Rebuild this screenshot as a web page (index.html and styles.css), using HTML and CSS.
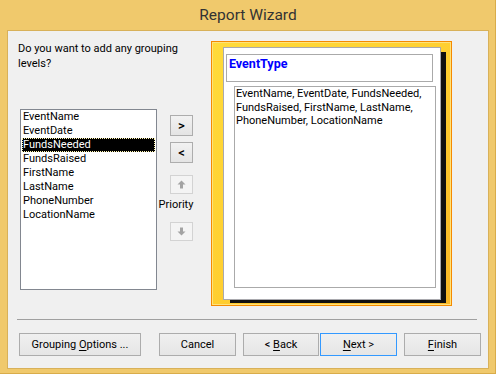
FILE: index.html
```html
<!DOCTYPE html>
<html>
<head>
<meta charset="utf-8">
<link rel="stylesheet" href="styles.css">
</head>
<body>
<div class="window">
  <div class="titlebar">Report Wizard</div>
  <div class="client">
    <div class="main">
      <div class="leftcol">
        <div class="question">Do you want to add any grouping levels?</div>
        <div class="listbox">
          <div class="item">EventName</div>
          <div class="item">EventDate</div>
          <div class="item selected">FundsNeeded</div>
          <div class="item">FundsRaised</div>
          <div class="item">FirstName</div>
          <div class="item">LastName</div>
          <div class="item">PhoneNumber</div>
          <div class="item">LocationName</div>
        </div>
      </div>
      <div class="midcol">
        <div class="sbtn btn-add">&gt;</div>
        <div class="sbtn btn-remove">&lt;</div>
        <div class="sbtn disabled btn-up">
          <svg width="9" height="9" viewBox="0 0 9 9"><path d="M4.5 0.5 L8.5 4.5 L6 4.5 L6 8.5 L3 8.5 L3 4.5 L0.5 4.5 Z" fill="#a3a3a3"/></svg>
        </div>
        <div class="priority">Priority</div>
        <div class="sbtn disabled btn-down">
          <svg width="9" height="9" viewBox="0 0 9 9"><path d="M4.5 8.5 L8.5 4.5 L6 4.5 L6 0.5 L3 0.5 L3 4.5 L0.5 4.5 Z" fill="#a3a3a3"/></svg>
        </div>
      </div>
      <div class="preview">
        <div class="page">
          <div class="grouphead">EventType</div>
          <div class="fields">EventName, EventDate, FundsNeeded, FundsRaised, FirstName, LastName, PhoneNumber, LocationName</div>
        </div>
      </div>
    </div>
    <div class="footer">
      <div class="separator"></div>
      <div class="buttons">
        <div class="btn btn-group"><span>Grouping <u>O</u>ptions ...</span></div>
        <div class="btn btn-cancel"><span>Cancel</span></div>
        <div class="btn btn-back"><span>&lt; <u>B</u>ack</span></div>
        <div class="btn btn-next default"><span><u>N</u>ext &gt;</span></div>
        <div class="btn btn-finish"><span><u>F</u>inish</span></div>
      </div>
    </div>
  </div>
</div>
</body>
</html>
```
FILE: styles.css
```css
* { box-sizing: border-box; }
html, body { margin: 0; padding: 0; }
body {
  width: 496px;
  height: 374px;
  overflow: hidden;
  font-family: Roboto, "Liberation Sans", sans-serif;
  font-size: 11px;
  color: #000;
}
.window {
  width: 496px;
  height: 374px;
  background: #f0c96c;
  border-right: 1px solid #d9ac4a;
  border-bottom: 1px solid #d9ac4a;
  display: flex;
  flex-direction: column;
}
.titlebar {
  height: 30px;
  line-height: 30px;
  text-align: center;
  font-size: 15.5px;
  color: #333;
  padding-left: 1px;
}
.client {
  margin: 0 6px 0 7px;
  width: 482px;
  height: 339px;
  border: 1px solid #d8b15a;
  background: #f0f0f0;
  display: flex;
  flex-direction: column;
  overflow: hidden;
}
.main {
  display: flex;
  padding: 10px 0 0 10px;
  height: 275px;
}
.leftcol {
  width: 139px;
  flex: none;
  display: flex;
  flex-direction: column;
}
.question {
  line-height: 15px;
  font-size: 11px;
  width: 180px;
}
.listbox {
  margin: 38px 0 0 2px;
  width: 137px;
  height: 181px;
  background: #fff;
  border: 1px solid #828790;
  font-size: 11px;
}
.item {
  height: 14px;
  line-height: 14px;
  padding-left: 1px;
  margin: 0 1px;
}
.item.selected {
  background: #000;
  color: #fff;
  outline: 1px dotted #fff6b0;
  outline-offset: -1px;
}
.midcol {
  width: 36px;
  flex: none;
  margin-left: 1px;
  padding-top: 74px;
  display: flex;
  flex-direction: column;
}
.sbtn {
  width: 23px;
  height: 21px;
  margin-left: 12px;
  border: 1px solid #adadad;
  background: linear-gradient(#f2f2f2, #e4e4e4);
  display: flex;
  align-items: center;
  justify-content: center;
  font-size: 13px;
  font-weight: 500;
  color: #000;
}
.btn-remove { margin-top: 6px; }
.btn-up { margin-top: 12px; height: 19px; }
.btn-down { height: 19px; }
.sbtn.disabled {
  border-color: #d3d3d3;
  background: #f4f4f4;
}
.priority {
  text-align: center;
  font-size: 11px;
  height: 28px;
  line-height: 22px;
  width: 36px;
}
.preview {
  flex: none;
  margin-left: 17px;
  width: 241px;
  height: 265px;
  border: 1px solid #f58a00;
  box-shadow: inset 0 0 0 1px #ffe27a;
  background: linear-gradient(135deg, #ffdb3a 0%, #ffcf30 50%, #f9b726 100%);
  padding: 5px 0 0 11px;
}
.page {
  width: 218px;
  height: 253px;
  background: #fff;
  border: 1px solid #a9a9ae;
  box-shadow: 6px 4px 0 -1px #101010;
  padding: 6px 0 0 2px;
}
.grouphead {
  width: 207px;
  height: 28px;
  border: 1px solid #aaa;
  color: #0000ff;
  font-weight: bold;
  font-size: 12.5px;
  padding: 2px 0 0 2px;
  line-height: 14px;
}
.fields {
  margin: 4px 0 0 8px;
  width: 202px;
  height: 202px;
  border: 1px solid #aaa;
  font-size: 11px;
  line-height: 13.5px;
  padding: 0 2px 0 1px;
}
.footer {
  padding: 13px 11px 0 9px;
}
.separator {
  height: 1px;
  background: #a0a0a0;
}
.buttons {
  display: flex;
  margin-top: 13px;
  padding-left: 2px;
}
.btn {
  flex: none;
  height: 23px;
  border: 1px solid #acacac;
  background: linear-gradient(#f0f0f0, #e5e5e5);
  display: flex;
  align-items: center;
  justify-content: center;
  font-size: 11px;
  color: #000;
}
.btn u { text-underline-offset: 2px; }
.btn-group { width: 122px; }
.btn-cancel { width: 77px; margin-left: 18px; }
.btn-back { width: 76px; margin-left: 7px; }
.btn-next { width: 77px; margin-left: 1px; }
.btn-finish { width: 77px; margin-left: 7px; }
.btn.default { border-color: #3399ff; }
```
